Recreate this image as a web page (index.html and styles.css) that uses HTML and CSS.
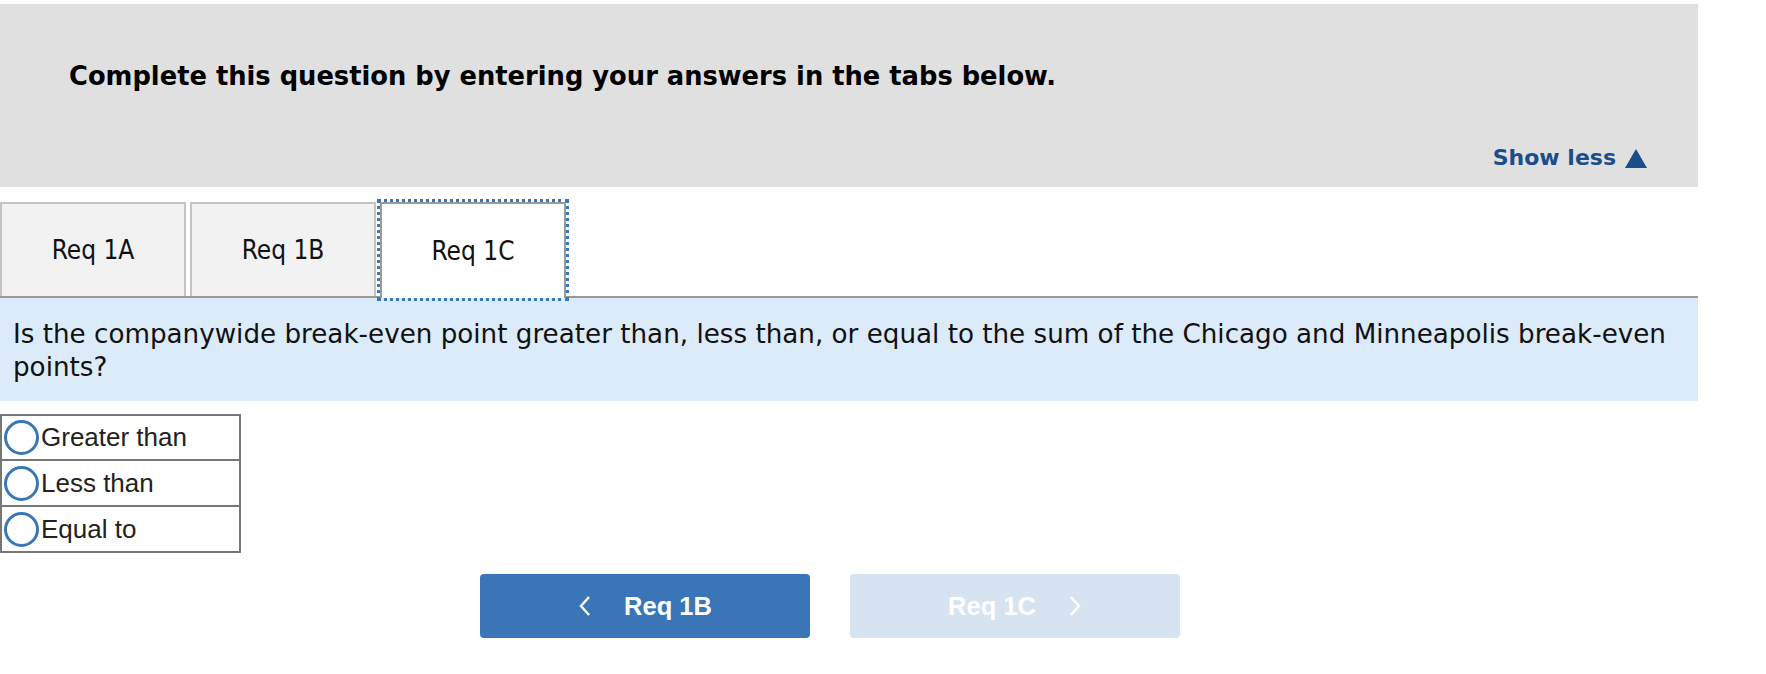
FILE: index.html
```html
<!DOCTYPE html>
<html>
<head>
<meta charset="utf-8">
<link rel="stylesheet" href="styles.css">
</head>
<body>
<div class="head">
  <h2 class="title">Complete this question by entering your answers in the tabs below.</h2>
  <div class="show-less"><span>Show less</span><svg class="tri" width="22" height="19" viewBox="0 0 22 19"><polygon points="11,0 22,19 0,19" fill="#1a4d89"/></svg></div>
</div>
<div class="tabs">
  <div class="tab">Req 1A</div>
  <div class="tab">Req 1B</div>
  <div class="tab active">Req 1C</div>
</div>
<div class="question">Is the companywide break-even point greater than, less than, or equal to the sum of the Chicago and Minneapolis break-even points?</div>
<table class="choices">
  <tr><td><span class="radio"></span>Greater than</td></tr>
  <tr><td><span class="radio"></span>Less than</td></tr>
  <tr><td><span class="radio"></span>Equal to</td></tr>
</table>
<div class="nav">
  <button class="btn prev"><svg class="chev" width="14" height="20" viewBox="0 0 14 20"><polyline points="11,1 3,10 11,19" fill="none" stroke="#fff" stroke-width="2.4"/></svg><span>Req 1B</span></button>
  <button class="btn next"><span>Req 1C</span><svg class="chev" width="14" height="20" viewBox="0 0 14 20"><polyline points="3,1 11,10 3,19" fill="none" stroke="#fff" stroke-width="2.4"/></svg></button>
</div>
</body>
</html>
```
FILE: styles.css
```css
html, body { margin: 0; padding: 0; background: #fff; }
body { font-family: "DejaVu Sans Condensed", "DejaVu Sans", sans-serif; color: #111; width: 1766px; }

.head {
  margin-top: 4px;
  width: 1698px;
  height: 183px;
  background: #e0e0e0;
  box-sizing: border-box;
  padding: 57px 51px 0 69px;
  display: flex;
  flex-direction: column;
}
.title {
  margin: 0;
  font-family: "DejaVu Sans", sans-serif;
  font-size: 25.75px;
  line-height: 30px;
  font-weight: bold;
  color: #000;
}
.show-less {
  align-self: flex-end;
  margin-top: 54px;
  display: flex;
  align-items: center;
  gap: 9px;
  font-family: "DejaVu Sans", sans-serif;
  font-weight: bold;
  font-size: 22px;
  line-height: 26px;
  color: #1a4d89;
}
.tri { display: block; }

.tabs {
  margin-top: 15px;
  width: 1698px;
  display: flex;
  gap: 4px;
  align-items: flex-end;
  border-bottom: 2px solid #999;
  height: 94px;
}
.tab {
  width: 186px;
  height: 94px;
  box-sizing: border-box;
  border: 2px solid #c4c4c4;
  border-bottom: none;
  background: #f2f2f2;
  display: flex;
  align-items: center;
  justify-content: center;
  font-size: 26px;
  color: #111;
}
.tab.active {
  height: 96px;
  margin-bottom: -2px;
  background: #fff;
  border-color: #999;
  outline: 3px dotted #3a77b8;
  outline-offset: 0;
}

.question {
  width: 1698px;
  box-sizing: border-box;
  background: #dbebf9;
  padding: 20px 13px 17px;
  font-family: "DejaVu Sans", sans-serif;
  font-size: 26.2px;
  line-height: 33px;
  color: #111;
}

.choices {
  margin-top: 13px;
  border-collapse: collapse;
  width: 241px;
  font-family: "Liberation Sans", Arial, sans-serif;
  font-size: 26px;
  color: #222;
  display: block;
}
.choices tbody, .choices tr { display: block; }
.choices td {
  width: 241px;
  box-sizing: border-box;
  border: 2px solid #777;
  height: 47px;
  padding: 0 0 0 2px;
  display: flex;
  align-items: center;
  gap: 2px;
}
.choices tr + tr td { border-top: none; height: 46px; }
.radio {
  width: 35px;
  height: 35px;
  box-sizing: border-box;
  border: 3.5px solid #3a77b8;
  border-radius: 50%;
  flex: none;
}

.nav {
  margin-top: 21px;
  margin-left: 480px;
  display: flex;
  gap: 40px;
}
.btn {
  width: 330px;
  height: 64px;
  border: none;
  border-radius: 4px;
  background: #3a76b7;
  color: #fff;
  font-family: "Liberation Sans", Arial, sans-serif;
  font-weight: bold;
  font-size: 25.5px;
  display: flex;
  align-items: center;
  justify-content: center;
  gap: 32px;
  padding: 0;
}
.btn.next { background: #d6e4f1; }
.chev { display: block; }
```
